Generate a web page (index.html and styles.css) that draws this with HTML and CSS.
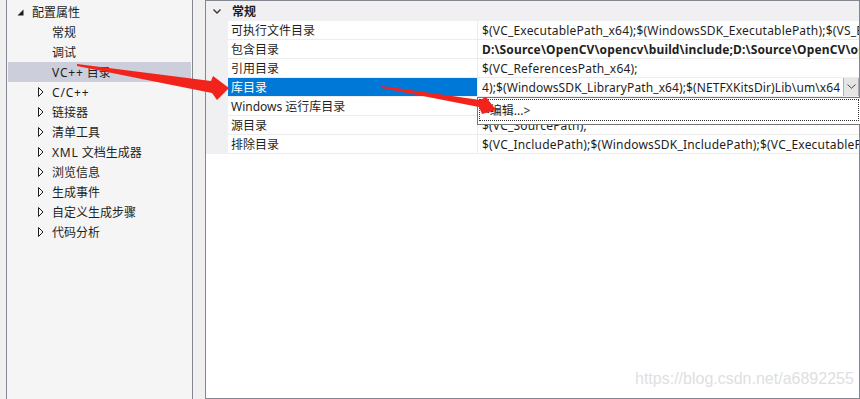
FILE: index.html
```html
<!DOCTYPE html>
<html>
    <head>
        <meta charset="utf-8">
        <link rel="stylesheet" href="styles.css">
    </head>
    <body>
        <div class="app">
            <div class="tree">
                <div class="node lvl0"><span class="twisty"><svg width="7" height="7" viewBox="0 0 7 7"><polygon points="6.5,0.5 6.5,6.5 0.5,6.5" fill="#1e1e1e"/></svg></span>配置属性</div>
                <div class="node lvl1"><span class="twisty"></span>常规</div>
                <div class="node lvl1"><span class="twisty"></span>调试</div>
                <div class="node lvl1 sel"><span class="twisty"></span><span class="lat">VC++</span>&nbsp;目录</div>
                <div class="node lvl1"><span class="twisty"><svg class="closed" width="6" height="10" viewBox="0 0 6 10"><polygon points="0.5,0.5 5,5 0.5,9.5" fill="none" stroke="#1e1e1e"/></svg></span><span class="lat">C/C++</span></div>
                <div class="node lvl1"><span class="twisty"><svg class="closed" width="6" height="10" viewBox="0 0 6 10"><polygon points="0.5,0.5 5,5 0.5,9.5" fill="none" stroke="#1e1e1e"/></svg></span>链接器</div>
                <div class="node lvl1"><span class="twisty"><svg class="closed" width="6" height="10" viewBox="0 0 6 10"><polygon points="0.5,0.5 5,5 0.5,9.5" fill="none" stroke="#1e1e1e"/></svg></span>清单工具</div>
                <div class="node lvl1"><span class="twisty"><svg class="closed" width="6" height="10" viewBox="0 0 6 10"><polygon points="0.5,0.5 5,5 0.5,9.5" fill="none" stroke="#1e1e1e"/></svg></span><span class="lat">XML</span>&nbsp;文档生成器</div>
                <div class="node lvl1"><span class="twisty"><svg class="closed" width="6" height="10" viewBox="0 0 6 10"><polygon points="0.5,0.5 5,5 0.5,9.5" fill="none" stroke="#1e1e1e"/></svg></span>浏览信息</div>
                <div class="node lvl1"><span class="twisty"><svg class="closed" width="6" height="10" viewBox="0 0 6 10"><polygon points="0.5,0.5 5,5 0.5,9.5" fill="none" stroke="#1e1e1e"/></svg></span>生成事件</div>
                <div class="node lvl1"><span class="twisty"><svg class="closed" width="6" height="10" viewBox="0 0 6 10"><polygon points="0.5,0.5 5,5 0.5,9.5" fill="none" stroke="#1e1e1e"/></svg></span>自定义生成步骤</div>
                <div class="node lvl1"><span class="twisty"><svg class="closed" width="6" height="10" viewBox="0 0 6 10"><polygon points="0.5,0.5 5,5 0.5,9.5" fill="none" stroke="#1e1e1e"/></svg></span>代码分析</div>
            </div>

            <div class="props">
                <div class="cat">
                    <span class="gut"><svg width="8" height="5" viewBox="0 0 8 5"><polyline points="0.5,0.5 4,4 7.5,0.5" fill="none" stroke="#333" stroke-width="1.3"/></svg></span>
                    <span class="cat-name">常规</span>
                </div>
                <div class="prop"><span class="gut"></span><span class="pname">可执行文件目录</span><span class="pval">$(VC_ExecutablePath_x64);$(WindowsSDK_ExecutablePath);$(VS_ExecutablePath);$(MSBuild_ExecutablePath)</span></div>
                <div class="prop"><span class="gut"></span><span class="pname">包含目录</span><span class="pval bold">D:\Source\OpenCV\opencv\build\include;D:\Source\OpenCV\opencv\build\include\opencv2</span></div>
                <div class="prop"><span class="gut"></span><span class="pname">引用目录</span><span class="pval">$(VC_ReferencesPath_x64);</span></div>
                <div class="prop active"><span class="gut"></span><span class="pname">库目录</span><span class="pval edit"><span class="etext">4);$(WindowsSDK_LibraryPath_x64);$(NETFXKitsDir)Lib\um\x64</span><span class="dd"><svg width="9" height="5" viewBox="0 0 9 5"><polyline points="0.5,0.5 4.5,4.2 8.5,0.5" fill="none" stroke="#444"/></svg></span></span></div>
                <div class="prop"><span class="gut"></span><span class="pname">Windows 运行库目录</span><span class="pval"></span></div>
                <div class="prop"><span class="gut"></span><span class="pname">源目录</span><span class="pval">$(VC_SourcePath);</span></div>
                <div class="prop"><span class="gut"></span><span class="pname">排除目录</span><span class="pval">$(VC_IncludePath);$(WindowsSDK_IncludePath);$(VC_ExecutablePath_x64)</span></div>

                <div class="popup"><div class="focus">&lt;编辑...&gt;</div></div>
            </div>
        </div>

        <div class="watermark">https://blog.csdn.net/a6892255</div>

        <svg class="arrows" width="860" height="399" viewBox="0 0 860 399">
            <polygon fill="#f2231b" points="77,64 211,81 213,76 229,88 217,100 212,93 77,66"/>
            <polygon fill="#f2231b" points="382,86 480,100 486,97 496,110 482,114 479,107 382,88"/>
        </svg>
    </body>
</html>
```

FILE: styles.css
```css
html, body { margin: 0; padding: 0; width: 860px; height: 399px; overflow: hidden;
             background-color: #f0f0f0; color: #1e1e1e;
             font-family: "Noto Sans", "Noto Sans CJK SC", sans-serif; font-size: 12px; }

.app {
    display: flex;
    height: 399px;
}

/* left tree */
.tree {
    margin-left: 6px;
    width: 183px;
    padding: 2px 1px 0 1px;
    background: #f5f5f5;
    border-left: 1px solid #828790;
    border-right: 1px solid #828790;
}
.node {
    display: flex;
    align-items: center;
    height: 20px;
    white-space: nowrap;
}
.node .lat { letter-spacing: 0.8px; }
.node.lvl0 { padding-left: 6px; }
.node.lvl1 { padding-left: 26px; }
.node.sel { background: #cccedb; }
.twisty {
    width: 18px;
    height: 20px;
    display: flex;
    align-items: center;
}
.lvl0 .twisty svg { margin-left: 3px; }
.twisty svg.closed { margin-left: 4px; }

/* property grid */
.props {
    position: relative;
    margin-left: 12px;
    width: 653px;
    height: 397px;
    background: #fff;
    border: 1px solid #828790;
}
.cat {
    display: flex;
    height: 20px;
    align-items: center;
    background: #f0f0f3;
    font-weight: bold;
}
.cat .gut {
    width: 22px;
    height: 20px;
    display: flex;
    align-items: center;
    justify-content: center;
    padding-right: 1px;
}
.cat-name { padding-left: 3px; }

.prop {
    display: grid;
    grid-template-columns: 22px 250px 1fr;
    height: 19px;
}
.prop .gut { background: #f0f0f3; }
.pname, .pval {
    display: flex;
    align-items: center;
    height: 18px;
    border-bottom: 1px solid #ececec;
    white-space: nowrap;
    overflow: hidden;
}
.pname {
    padding-left: 3px;
    border-right: 1px solid #ececec;
}
.pval { padding-left: 4px; letter-spacing: 0.2px; }
.pval.bold { font-weight: bold; letter-spacing: 0.15px; }
.prop.active .pname { background: #0078d7; color: #fff; }
.pval.edit { padding-right: 0; justify-content: space-between; letter-spacing: 0; }
.etext { overflow: hidden; letter-spacing: 0.1px; }
.dd {
    flex: none;
    width: 14px;
    height: 18px;
    margin-top: -1px;
    display: flex;
    align-items: center;
    justify-content: center;
    background: #e5e5e5;
    border: 1px solid #adadad;
}

.popup {
    position: absolute;
    left: 271px;
    top: 96px;
    width: 380px;
    height: 24px;
    background: #fff;
    border: 1px solid #767676;
    padding: 1px;
}
.focus {
    height: 20px;
    border: 1px dotted #333;
    padding-left: 3px;
    display: flex;
    align-items: center;
}

.watermark {
    position: absolute;
    left: 635px;
    top: 370px;
    font-family: "Liberation Sans", Arial, sans-serif;
    font-size: 16px;
    color: #e0e0e0;
}

.arrows {
    position: absolute;
    left: 0;
    top: 0;
    pointer-events: none;
}
```
